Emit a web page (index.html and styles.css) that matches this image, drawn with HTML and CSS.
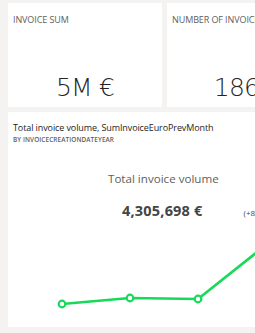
FILE: index.html
```html
<!DOCTYPE html>
<html>
<head>
<meta charset="utf-8">
<link rel="stylesheet" href="styles.css">
</head>
<body>
<div class="canvas">
  <div class="card kpi">
    <div class="kpi-title">INVOICE SUM</div>
    <div class="kpi-value">5M €</div>
  </div>
  <div class="card kpi">
    <div class="kpi-title">NUMBER OF INVOICES</div>
    <div class="kpi-value">1864</div>
  </div>
  <div class="card chart-card">
    <div class="chart-title">Total invoice volume, SumInvoiceEuroPrevMonth</div>
    <div class="chart-sub">BY INVOICECREATIONDATEYEAR</div>
    <div class="chart-head">Total invoice volume</div>
    <div class="chart-figures">
      <span class="big">4,305,698 €</span>
      <span class="delta">(+8.2%)</span>
    </div>
    <svg class="line" width="313" height="110" viewBox="0 0 313 110">
      <polyline points="54,85 122,79 190,80 258,26 300,8" fill="none" stroke="#17d95a" stroke-width="2.6" stroke-linejoin="round"/>
      <circle cx="54" cy="85" r="3.3" fill="#fff" stroke="#17d95a" stroke-width="2.2"/>
      <circle cx="122" cy="79" r="3.3" fill="#fff" stroke="#17d95a" stroke-width="2.2"/>
      <circle cx="190" cy="80" r="3.3" fill="#fff" stroke="#17d95a" stroke-width="2.2"/>
    </svg>
  </div>
</div>
</body>
</html>
```

FILE: styles.css
```css
html, body {
  margin: 0;
  padding: 0;
  background: #f4f3f1;
  overflow: hidden;
  width: 255px;
  height: 333px;
}
.canvas {
  display: grid;
  grid-template-columns: 154px 154px;
  grid-template-rows: 104px 215px;
  gap: 5px;
  padding: 3px 0 0 8px;
  width: 330px;
  font-family: "Open Sans", "Noto Sans", sans-serif;
}
.card {
  background: #ffffff;
  overflow: hidden;
}
.kpi {
  display: flex;
  flex-direction: column;
}
.kpi-title {
  font-size: 9px;
  color: #605e5c;
  padding: 10px 0 0 5px;
  white-space: nowrap;
  letter-spacing: -0.1px;
}
.kpi-value {
  font-family: "DejaVu Sans", sans-serif;
  font-weight: 200;
  font-size: 25px;
  color: #252423;
  text-align: center;
  margin-top: 47px;
  letter-spacing: -0.8px;
  white-space: nowrap;
}
.chart-card {
  grid-column: 1 / 3;
  position: relative;
}
.chart-title {
  font-size: 9px;
  color: #252423;
  padding: 9px 0 0 5px;
  white-space: nowrap;
  letter-spacing: -0.1px;
}
.chart-sub {
  font-size: 6.4px;
  font-weight: 600;
  color: #605e5c;
  padding-left: 5px;
  margin-top: 1px;
  white-space: nowrap;
  letter-spacing: 0.1px;
}
.chart-head {
  font-size: 11.6px;
  color: #605e5c;
  margin-top: 27px;
  padding-left: 100px;
  white-space: nowrap;
}
.chart-figures {
  display: flex;
  align-items: baseline;
  margin-top: 15px;
  padding-left: 114px;
  white-space: nowrap;
}
.big {
  font-size: 14.5px;
  font-weight: 700;
  color: #454545;
  letter-spacing: 0.2px;
}
.delta {
  font-size: 8px;
  color: #454545;
  margin-left: 41px;
}
.line {
  display: block;
  margin-top: -1px;
}
```
